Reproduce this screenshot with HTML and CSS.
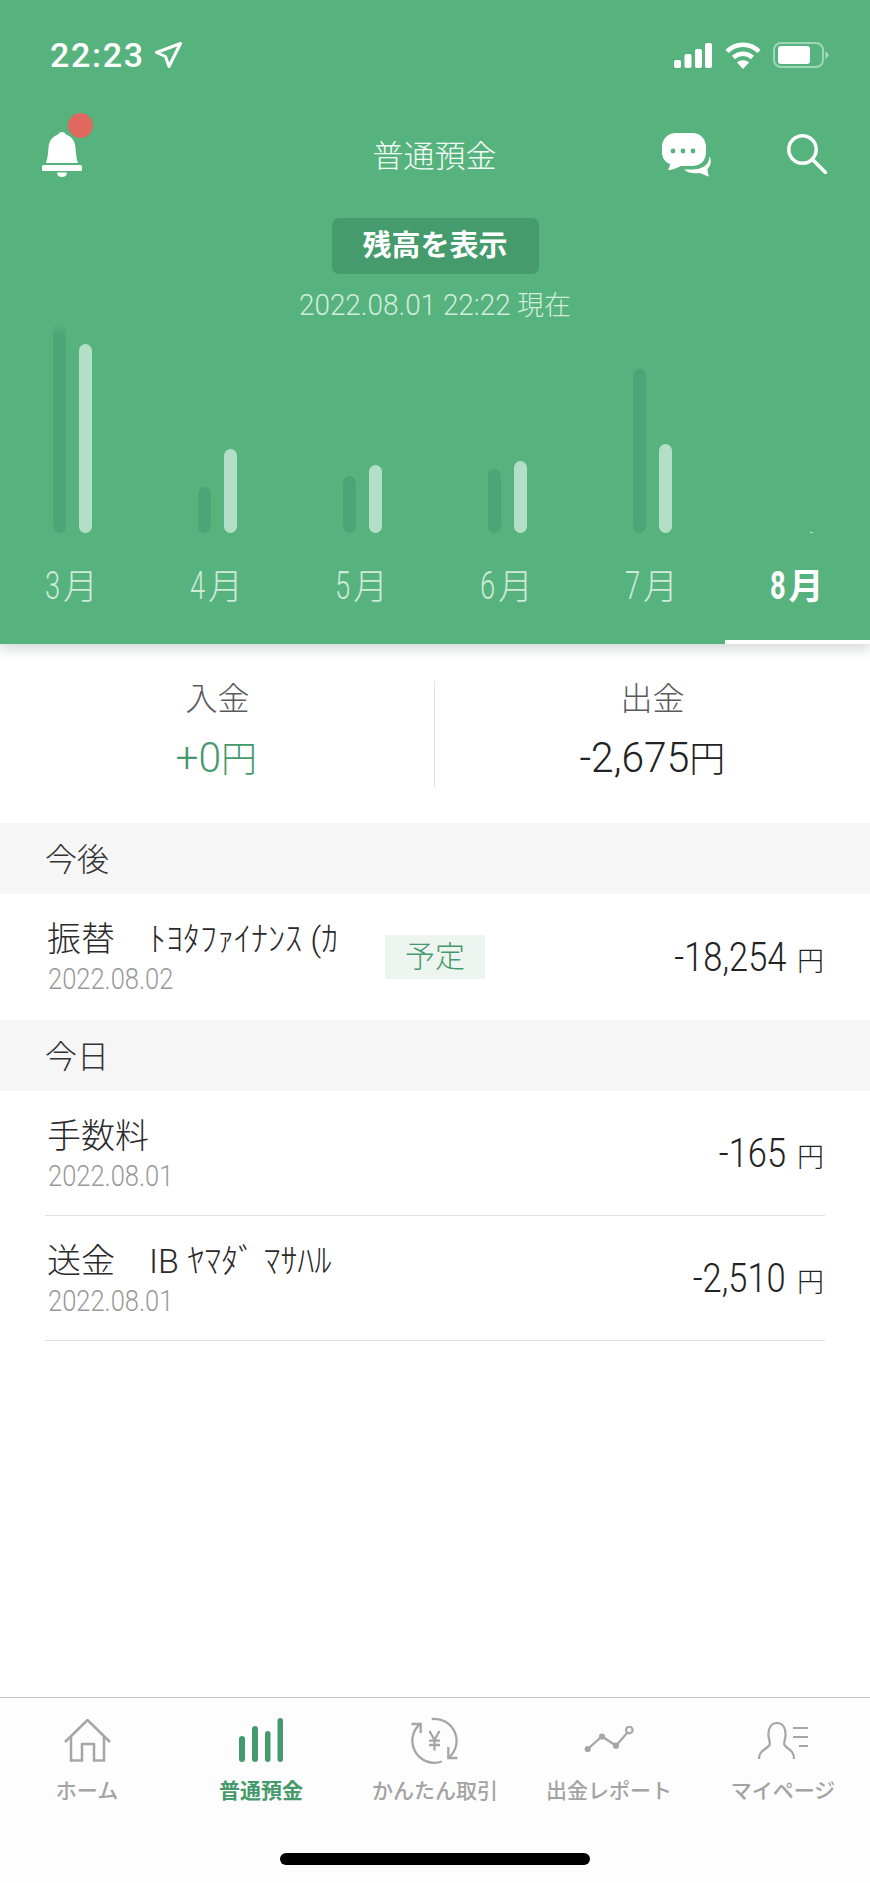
FILE: index.html
```html
<!DOCTYPE html>
<html lang="ja">
<head>
<meta charset="utf-8">
<title>普通預金</title>
<link rel="stylesheet" href="styles.css">
</head>
<body>
<div class="page">
  <header class="hero">
    <div class="status">
      <div class="status-left">
        <span class="clock">22:23</span>
        <svg class="i-loc" width="27" height="26" viewBox="0 0 27 26"><path d="M1.5 10.5 25.5 1.5 14 24.5 10.5 14.5Z" fill="none" stroke="#fff" stroke-width="3" stroke-linejoin="round"/></svg>
      </div>
      <div class="status-right">
        <svg width="38" height="25" viewBox="0 0 38 25" fill="#fff"><rect x="0" y="17" width="7" height="8" rx="2"/><rect x="10.500" y="11" width="7" height="14" rx="2"/><rect x="21" y="6" width="7" height="19" rx="2"/><rect x="31" y="0" width="7" height="25" rx="2"/></svg>
        <svg class="i-wifi" width="36" height="27" viewBox="0 0 36 27"><path d="M2 9.500C11 .5 25 .5 34 9.500" fill="none" stroke="#fff" stroke-width="4.500"/><path d="M8.500 15.500C14 10.500 22 10.500 27.500 15.500" fill="none" stroke="#fff" stroke-width="4.500"/><path d="M18 27 12 20.500C15.500 17.500 20.500 17.500 24 20.500Z" fill="#fff"/></svg>
        <svg class="i-batt" width="56" height="26" viewBox="0 0 56 26"><rect x="1" y="1" width="49" height="24" rx="7" fill="none" stroke="#fff" stroke-opacity=".45" stroke-width="2"/><rect x="5" y="4" width="32" height="18" rx="3" fill="#fff"/><path d="M52.500 9 56 13 52.500 17Z" fill="#fff" fill-opacity=".5"/></svg>
      </div>
    </div>
    <nav class="nav">
      <div class="bell">
        <svg width="40" height="45" viewBox="0 0 40 45" fill="#fff"><path d="M20 0c2 0 3 1 4 2.500 6 2 9 7 9.500 13 .5 7 1 11 2.500 15.500H4c1.500-4.500 2-8.500 2.500-15.500.5-6 3.500-11 9.500-13C17 1 18 0 20 0Z"/><rect y="33" width="40" height="6" rx="1.500"/><path d="M15 40.500h10c0 3-2.200 4.500-5 4.500s-5-1.500-5-4.500Z"/></svg>
        <span class="dot"></span>
      </div>
      <h1 class="title">普通預金</h1>
      <div class="nav-right">
        <svg width="50" height="44" viewBox="0 0 50 44"><path fill="#fff" d="M14 0H30C38.500 0 44 6 44 14V19C44 28 38 33 30 33H19C15 35 10 37 6 37 7 35 8 33 8 31 3 29 0 25 0 19V14C0 6 6 0 14 0Z"/><circle cx="11" cy="18" r="2.400" fill="#57b37e"/><circle cx="21" cy="18" r="2.400" fill="#57b37e"/><circle cx="31" cy="18" r="2.400" fill="#57b37e"/><path fill="#fff" d="M47.500 23C50 28 48.500 33 45.500 36 45.500 39 46.500 42 47 43.500 43.500 42.500 40.500 41 37.500 40 30 41 25 39.500 22 36.500H30C40 36.500 47.500 32 47.500 23Z"/></svg>
        <svg class="i-search" width="40" height="40" viewBox="0 0 40 40" fill="none" stroke="#fff" stroke-width="3.500" stroke-linecap="round"><circle cx="15.500" cy="15.500" r="13.700"/><path d="M26.500 26.500 38.500 38.500"/></svg>
      </div>
    </nav>
    <button class="reveal" type="button">残高を表示</button>
    <p class="asof"><span class="asof-num">2022.08.01 22:22</span> 現在</p>
    <div class="chart">
      <div class="chart-col"><i class="bar bar-out bar-fade" style="height:210px"></i><i class="bar bar-in" style="height:189px"></i></div>
      <div class="chart-col"><i class="bar bar-out" style="height:46px"></i><i class="bar bar-in" style="height:84px"></i></div>
      <div class="chart-col"><i class="bar bar-out" style="height:57px"></i><i class="bar bar-in" style="height:68px"></i></div>
      <div class="chart-col"><i class="bar bar-out" style="height:64px"></i><i class="bar bar-in" style="height:72px"></i></div>
      <div class="chart-col"><i class="bar bar-out" style="height:164px"></i><i class="bar bar-in" style="height:89px"></i></div>
      <div class="chart-col"><i class="bar bar-out" style="height:0"></i><i class="bar bar-in bar-tiny" style="height:1px"></i></div>
    </div>
    <div class="months">
      <div class="month"><span class="m-num">3</span>月</div>
      <div class="month"><span class="m-num">4</span>月</div>
      <div class="month"><span class="m-num">5</span>月</div>
      <div class="month"><span class="m-num">6</span>月</div>
      <div class="month"><span class="m-num">7</span>月</div>
      <div class="month month-active"><span class="m-num">8</span>月</div>
    </div>
  </header>

  <section class="summary">
    <div class="sum-col">
      <div class="sum-label">入金</div>
      <div class="sum-value sum-plus"><span class="sum-num">+0</span>円</div>
    </div>
    <div class="sum-col sum-col-right">
      <div class="sum-label">出金</div>
      <div class="sum-value"><span class="sum-num">-2,675</span>円</div>
    </div>
  </section>

  <h2 class="sec-head">今後</h2>
  <div class="group group-first">
    <div class="row row-plain">
      <div class="row-left">
        <div class="row-title">振替　ﾄﾖﾀﾌｧｲﾅﾝｽ (ｶ</div>
        <div class="row-date">2022.08.02</div>
      </div>
      <span class="badge">予定</span>
      <div class="amount"><span class="amt-num">-18,254</span><span class="amt-yen">円</span></div>
    </div>
  </div>

  <h2 class="sec-head">今日</h2>
  <div class="group">
    <div class="row">
      <div class="row-left">
        <div class="row-title">手数料</div>
        <div class="row-date">2022.08.01</div>
      </div>
      <div class="amount"><span class="amt-num">-165</span><span class="amt-yen">円</span></div>
    </div>
    <div class="row">
      <div class="row-left">
        <div class="row-title">送金　IB ﾔﾏﾀﾞ ﾏｻﾊﾙ</div>
        <div class="row-date">2022.08.01</div>
      </div>
      <div class="amount"><span class="amt-num">-2,510</span><span class="amt-yen">円</span></div>
    </div>
  </div>

  <footer class="tabbar">
    <div class="tabs">
      <div class="tab">
        <div class="tab-icon"><svg width="47" height="43" viewBox="0 0 47 43" fill="none" stroke="#a6a6a6" stroke-width="2.500"><path d="M1 23 23.500 1 46 23"/><path d="M7 17V41.500H18V25H30V41.500H40V17"/></svg></div>
        <div class="tab-label">ホーム</div>
      </div>
      <div class="tab tab-active">
        <div class="tab-icon"><svg width="44" height="44" viewBox="0 0 44 44" fill="#459a6b"><rect x="0" y="18" width="6" height="26" rx="3"/><rect x="13" y="8" width="6" height="36" rx="3"/><rect x="26" y="13" width="5.500" height="31" rx="2.750"/><rect x="38.500" y="0" width="5.500" height="44" rx="2.750"/></svg></div>
        <div class="tab-label">普通預金</div>
      </div>
      <div class="tab">
        <div class="tab-icon"><svg width="48" height="47" viewBox="-1 0 48 47" fill="none" stroke="#a6a6a6" stroke-width="2.300"><path d="M8.700 6.500A22 22 0 0 0 29.700 44.500"/><path d="M19.700 2A22 22 0 0 1 36.300 41"/><path d="M-.5 7H8.700V16"/><path d="M36.300 30V41H45.500"/><path d="M17.500 14 22.500 23 27.500 14M22.500 23V33.500M17 23.700H28M17 28H28"/></svg></div>
        <div class="tab-label">かんたん取引</div>
      </div>
      <div class="tab">
        <div class="tab-icon"><svg width="50" height="28" viewBox="0 0 50 28" fill="#a6a6a6" stroke="#a6a6a6" stroke-width="2.200"><path d="M3.700 23 18 10.500 32 19.700 43 7" fill="none"/><circle cx="3.700" cy="23" r="2"/><circle cx="18" cy="10.500" r="2"/><circle cx="32" cy="19.700" r="2"/><circle cx="45.300" cy="4" r="3.300" fill="#fdfdfd"/></svg></div>
        <div class="tab-label">出金レポート</div>
      </div>
      <div class="tab">
        <div class="tab-icon"><svg width="50" height="37" viewBox="0 0 50 37" fill="none" stroke="#a6a6a6" stroke-width="2.200"><path d="M1 37C1 28 8 28 11.500 23 12.500 21 11 18 10.500 14 10 6 13 1 19 1 25 1 28 6 27.500 14 27 18 25.500 21 26.500 23 30 28 36 28 36 37"/><path d="M35 6H50M35 15H50M41 24H50"/></svg></div>
        <div class="tab-label">マイページ</div>
      </div>
    </div>
    <div class="home-bar"></div>
  </footer>
</div>
</body>
</html>
```
FILE: styles.css
```css
* { box-sizing: border-box; }
html, body { margin: 0; padding: 0; background: #fff; }
body { font-family: Roboto, "Noto Sans CJK JP", sans-serif; color: #222; }
.page { width: 870px; height: 1883px; display: flex; flex-direction: column; overflow: hidden; }

/* header */
.hero { position: relative; z-index: 1; height: 644px; flex: none; background: #57b37e; color: #fff; box-shadow: 0 5px 12px rgba(60, 80, 70, .22); display: flex; flex-direction: column; }
.status { height: 110px; display: flex; align-items: center; justify-content: space-between; padding: 0 41px 0 50px; }
.status-left { display: flex; align-items: center; gap: 10px; }
.clock { font-size: 34px; font-weight: 500; letter-spacing: 1.700px; line-height: 34px; }
.status-right { display: flex; align-items: center; gap: 13px; }
.i-wifi { margin-right: -1px; }
.nav { height: 90px; display: grid; grid-template-columns: 1fr auto 1fr; align-items: center; padding: 0 43px 0 42px; }
.bell { position: relative; width: 40px; height: 45px; margin-top: -1px; }
.bell svg { display: block; }
.dot { position: absolute; left: 26px; top: -19px; width: 25px; height: 25px; border-radius: 50%; background: #e0685f; }
.title { margin: 4px 0 0; font-size: 31px; font-weight: 300; line-height: 40px; text-align: center; color: #f2faf5; }
.nav-right { display: flex; align-items: center; justify-content: flex-end; gap: 75px; }
.i-search { margin-top: -3px; }
.reveal { align-self: center; margin: 18px 0 0; width: 207px; height: 56px; padding: 0; border: 0; border-radius: 7px; background: #459b6c; color: #fff; font: 700 29px/56px Roboto, "Noto Sans CJK JP", sans-serif; }
.asof { margin: 16px 0 0; text-align: center; font-size: 27px; line-height: 30px; font-weight: 300; color: #d3ecdd; }
.asof-num { display: inline-block; font-size: 30px; transform: scaleX(.93); transform-origin: right center; margin-left: -16px; }
.chart { margin-top: 2px; height: 210px; display: grid; grid-template-columns: repeat(6, 145px); }
.chart-col { display: flex; align-items: flex-end; justify-content: center; gap: 13px; }
.bar { display: block; width: 13px; border-radius: 7px; }
.bar-out { background: #4aa676; }
.bar-in { background: #b3dfc8; }
.bar-fade { background: linear-gradient(to bottom, rgba(74, 166, 118, 0), #4aa676 14px); }
.bar-tiny { width: 3px; border-radius: 0; transform: translateX(1px); }
.months { margin-top: 33px; flex: 1; display: grid; grid-template-columns: repeat(6, 145px); }
.month { text-align: center; font-size: 35px; line-height: 40px; font-weight: 300; color: #cfe9da; }
.m-num { display: inline-block; font-size: 38px; transform: scaleX(.72); transform-origin: right center; margin-right: 3px; margin-left: -8px; }
.month-active { color: #fff; font-weight: 700; box-shadow: inset 0 -4px 0 #fff; }
.month-active .m-num { font-weight: 700; }

/* summary */
.summary { flex: none; height: 179px; padding: 37px 0 36px; display: grid; grid-template-columns: 435px 435px; }
.sum-col { height: 106px; text-align: center; }
.sum-col-right { box-shadow: -1px 0 0 #e2e2e2; }
.sum-label { font-size: 32px; line-height: 36px; color: #5a5a5a; font-weight: 300; }
.sum-value { margin-top: 19px; padding-right: 4px; font-size: 36px; line-height: 44px; font-weight: 300; color: #222; }
.sum-plus { color: #459a6b; }
.sum-num { display: inline-block; font-size: 42px; transform: scaleX(.97); transform-origin: right center; }

/* list */
.sec-head { margin: 0; flex: none; height: 71px; padding-left: 45px; background: #f6f6f6; font-size: 32px; font-weight: 300; line-height: 75px; color: #333; }
.group { flex: none; padding: 0 45px; }
.group-first { height: 126px; }
.row { height: 125px; display: flex; align-items: center; padding: 0 1px 0 3px; border-bottom: 1px solid #e2e2e2; }
.row-plain { border-bottom: 0; }
.row-left { width: 288px; height: 100%; padding-top: 25px; overflow: hidden; }
.row-title { margin-left: -1px; font-size: 34px; line-height: 40px; font-weight: 300; white-space: nowrap; color: #2a2a2a; }
.row-date { margin-top: 5px; font-size: 30px; line-height: 30px; font-weight: 300; color: #999; transform: scaleX(.85); transform-origin: left center; white-space: nowrap; }
.badge { margin-left: 49px; width: 100px; height: 44px; background: #eef5f1; color: #459a6b; text-align: center; font-size: 30px; line-height: 44px; font-weight: 300; }
.amount { margin-left: auto; display: flex; align-items: baseline; white-space: nowrap; }
.amt-num { display: inline-block; font-size: 41px; line-height: 50px; font-weight: 300; transform: scaleX(.84); transform-origin: right center; }
.amt-yen { margin-left: 11px; font-size: 27px; font-weight: 300; }

/* tab bar */
.tabbar { margin-top: auto; flex: none; height: 186px; background: #fdfdfd; border-top: 1px solid #c6c6c6; display: flex; flex-direction: column; align-items: center; }
.tabs { width: 100%; display: grid; grid-template-columns: repeat(5, 174px); padding-top: 12px; }
.tab { display: flex; flex-direction: column; align-items: center; color: #a3a3a3; }
.tab-icon { height: 60px; display: flex; align-items: center; justify-content: center; }
.tab-icon svg { display: block; }
.tab-label { font-size: 21px; line-height: 42px; font-weight: 500; white-space: nowrap; }
.tab-active { color: #459a6b; }
.tab-active .tab-label { font-weight: 700; }
.home-bar { margin-top: 41px; width: 310px; height: 12px; border-radius: 6px; background: #000; }
```
